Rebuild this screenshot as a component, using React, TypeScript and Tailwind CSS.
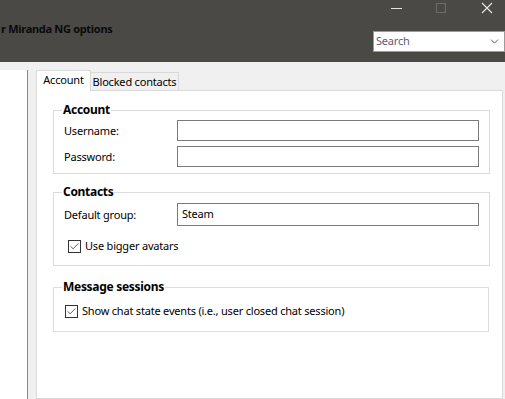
import { Check, ChevronDown } from "lucide-react";

const font = { fontFamily: '"Noto Sans", "Open Sans", sans-serif' };

function Field({ label, value, tall }: { label: string; value?: string; tall?: boolean }) {
  return (
    <div className="flex items-center">
      <span className="w-[113px] text-[11px] leading-[16px] tracking-[-0.2px]">{label}</span>
      <div
        className={`flex w-[302px] items-center border border-[#7a7a7a] bg-white pl-[4px] text-[11px] tracking-[-0.2px] ${
          tall ? "h-[23px]" : "h-[21px]"
        }`}
      >
        {value}
      </div>
    </div>
  );
}

function CheckRow({ label }: { label: string }) {
  return (
    <div className="flex items-center gap-[4px]">
      <span className="flex h-[13px] w-[13px] items-center justify-center border border-[#333] bg-white">
        <Check size={11} strokeWidth={1.6} className="text-[#222]" />
      </span>
      <span className="text-[11px] leading-[16px] tracking-[-0.2px]">{label}</span>
    </div>
  );
}

function Group({
  title,
  className,
  children,
}: {
  title: string;
  className?: string;
  children: React.ReactNode;
}) {
  return (
    <fieldset className="border border-[#dcdcdc]">
      <legend className="ml-[8px] px-[1px] text-[12px] font-bold leading-[16px] tracking-[-0.3px]">
        {title}
      </legend>
      <div className={className}>{children}</div>
    </fieldset>
  );
}

export default function App() {
  return (
    <div
      className="flex h-[399px] w-[505px] flex-col overflow-hidden bg-[#f0f0f0] text-[#000]"
      style={font}
    >
      {/* title bar */}
      <div className="flex h-[62px] shrink-0 bg-[#4b4946]">
        <div className="ml-[1px] mt-[21px] h-[16px] whitespace-nowrap text-[11px] font-bold leading-[16px] tracking-[-0.3px] text-[#0a0a0a]">
          r Miranda NG options
        </div>
        <div className="ml-auto flex flex-col items-end">
          <div className="flex h-[17px] items-start">
            <div className="mr-[34px] mt-[8px] h-px w-[11px] bg-[#e6e6e6]" />
            <div className="mr-[35px] mt-[3px] h-[10px] w-[10px] border border-[#6e6c69]" />
            <svg width="12" height="12" viewBox="0 0 12 12" className="mr-[12px] mt-[2px]">
              <path d="M1 1 L11 11 M11 1 L1 11" stroke="#e8e8e8" strokeWidth="1.1" />
            </svg>
          </div>
          <div className="mt-[14px] flex h-[21px] w-[132px] items-center border border-[#9a9a9a] bg-white pl-[2px] text-[11px] tracking-[-0.2px] text-[#5c5c78]">
            Search
            <ChevronDown size={13} strokeWidth={1.4} className="ml-auto mr-[3px] text-[#333]" />
          </div>
        </div>
      </div>

      {/* body */}
      <div className="flex flex-1 pt-[8px]">
        <div className="w-[28px] shrink-0 border-r border-[#828790] bg-white" />
        <div className="ml-[8px] flex w-[467px] flex-col">
          <div className="flex h-[20px] items-end">
            <div className="relative z-10 mb-[-1px] flex h-[21px] w-[55px] items-start justify-center whitespace-nowrap border border-b-0 border-[#d9d9d9] bg-white pt-[1px] text-[11px] leading-[16px] tracking-[-0.2px]">
              Account
            </div>
            <div className="flex h-[18px] w-[88px] items-center justify-center whitespace-nowrap border border-b-0 border-l-0 border-[#d9d9d9] bg-[#f0f0f0] text-[11px] leading-[16px] tracking-[-0.2px]">
              Blocked contacts
            </div>
          </div>
          <div className="flex-1 border border-[#d9d9d9] bg-white pl-[16px] pr-[13px] pt-[11px]">
            <Group title="Account" className="px-[10px] pb-[6px] pt-[2px]">
              <div className="flex flex-col gap-[5px]">
                <Field label="Username:" />
                <Field label="Password:" />
              </div>
            </Group>
            <div className="h-[10px]" />
            <Group title="Contacts" className="px-[10px] pb-[11px] pt-[3px]">
              <Field label="Default group:" value="Steam" tall />
              <div className="mt-[12px] pl-[4px]">
                <CheckRow label="Use bigger avatars" />
              </div>
            </Group>
            <div className="h-[13px]" />
            <Group title="Message sessions" className="px-[11px] pb-[12px] pt-[8px]">
              <CheckRow label="Show chat state events (i.e., user closed chat session)" />
            </Group>
          </div>
        </div>
      </div>
    </div>
  );
}
